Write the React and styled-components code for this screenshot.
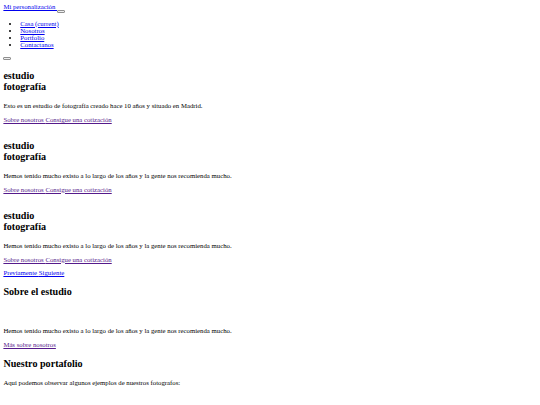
import React from "react";
import styled, { createGlobalStyle } from "styled-components";

// page was shot small: 1em here is 6.75px
const GlobalStyle = createGlobalStyle`
  html {
    background: #ffffff;
  }
  body {
    margin: 0.5em;
    font-family: "Liberation Serif", "Times New Roman", serif;
    font-size: 6.75px;
    color: #000000;
  }
`;

const Navbar = styled.nav`
  display: block;
`;

const Brand = styled.a`
  color: #0000ee;
  text-decoration: underline;
`;

const Toggler = styled.button`
  display: inline-block;
  box-sizing: border-box;
  width: 8px;
  height: 2.6px;
  padding: 0;
  border: 0.8px solid #8f8f8f;
  border-radius: 1px;
  background: #efefef;
  vertical-align: ${(props) => (props.$inline ? "-2.4px" : "top")};
`;

const NavList = styled.ul`
  margin: 1em 0;
  padding-left: 2.5em;
  list-style: disc;
`;

const NavItem = styled.li`
  line-height: normal;
`;

const Link = styled.a`
  color: ${(props) => (props.$visited ? "#551a8b" : "#0000ee")};
  text-decoration: underline;
`;

const ToggleRow = styled.div`
  display: flex;
  padding-top: 3.2px;
`;

const Carousel = styled.div`
  display: block;
`;

const Slide = styled.div`
  display: flow-root;
`;

const Headline = styled.h2`
  font-size: 1.5em;
  font-weight: bold;
  margin: 1em 0;
`;

const Text = styled.p`
  margin: 1em 0;
`;

const Controls = styled.div`
  line-height: normal;
`;

const Section = styled.section`
  display: block;
`;

const Picture = styled.div`
  height: 12.7px;
`;

const slides = [
  "Esto es un estudio de fotografía creado hace 10 años y situado en Madrid.",
  "Hemos tenido mucho existo a lo largo de los años y la gente nos recomienda mucho.",
  "Hemos tenido mucho existo a lo largo de los años y la gente nos recomienda mucho.",
];

const navLinks = ["Casa (current)", "Nosotros", "Portfolio", "Contactanos"];

const App = () => {
  return (
    <>
      <GlobalStyle />
      <Navbar>
        <Brand href="#"> Mi personalización </Brand>
        <Toggler $inline type="button" aria-label="menu" />
        <NavList>
          {navLinks.map((label) => (
            <NavItem key={label}>
              <Link href="#">{label}</Link>
            </NavItem>
          ))}
        </NavList>
      </Navbar>
      <ToggleRow>
        <Toggler type="button" aria-label="carrusel" />
      </ToggleRow>
      <Carousel>
        {slides.map((text, index) => (
          <Slide key={index}>
            <Headline>
              estudio
              <br />
              fotografía
            </Headline>
            <Text>{text}</Text>
            <Text>
              <Link $visited href="#">Sobre nosotros </Link>
              <Link $visited href="#">Consigue una cotización</Link>
            </Text>
          </Slide>
        ))}
        <Controls>
          <Link href="#">Previamente </Link>
          <Link href="#">Siguiente</Link>
        </Controls>
      </Carousel>
      <Section>
        <Headline>Sobre el estudio</Headline>
        <Picture />
        <Text>
          Hemos tenido mucho existo a lo largo de los años y la gente nos recomienda mucho.
        </Text>
        <Text>
          <Link $visited href="#">Más sobre nosotros</Link>
        </Text>
      </Section>
      <Section>
        <Headline>Nuestro portafolio</Headline>
        <Text>Aquí podemos observar algunos ejemplos de nuestros fotografos:</Text>
      </Section>
    </>
  );
};

export default App;
